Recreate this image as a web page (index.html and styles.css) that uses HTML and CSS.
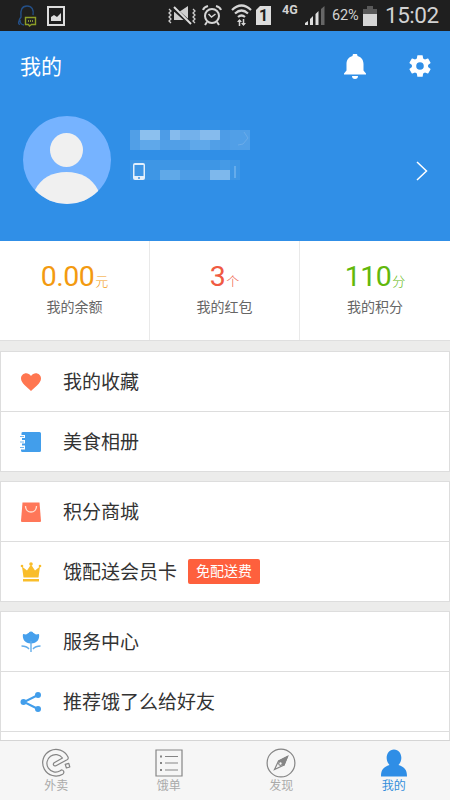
FILE: index.html
```html
<!DOCTYPE html>
<html lang="zh-CN">
<head>
<meta charset="utf-8">
<title>我的</title>
<link rel="stylesheet" href="styles.css">
</head>
<body>
<div class="screen">
  <div class="status">
    <svg class="s-qq" width="20" height="22" viewBox="0 0 20 22" fill="none"><path d="M3 19c-2 1-2-3 1-7C3 5 5 1 10 1s7 4 6 9M3 15c0 2 1 5 4 5" stroke="#244f86" stroke-width="1.4"/><path d="M8.500 12.500h10v7h-4l-2 1.500-1-1.500h-3z" stroke="#8c9d27" stroke-width="1.400"/><path d="M11 16h1m1 0h1m1 0h1" stroke="#a7b642" stroke-width="1.500"/></svg>
    <svg class="s-pic" width="18" height="20" viewBox="0 0 18 20"><path d="M1 1h16v18H1z" fill="none" stroke="#ddd" stroke-width="2"/><path d="M4 15v-4l3-2 3 2 4-4v8z" fill="#ddd"/></svg>
    <svg class="s-mute" width="29" height="20" viewBox="0 0 29 20"><path d="M7 6h5l9-6v17l-4-3-5 0H7z" fill="#cfcfcf"/><path d="M6 2l18 16" stroke="#1f1f1f" stroke-width="4"/><path d="M7 1l17 17" stroke="#ddd" stroke-width="2"/><path d="M2 3l2 2-2 2 2 2-2 2 2 2-2 2 2 2M26 3l2 2-2 2 2 2-2 2 2 2-2 2 2 2" fill="none" stroke="#ccc" stroke-width="1.300"/></svg>
    <svg class="s-alarm" width="20" height="21" viewBox="0 0 20 21" fill="none" stroke="#d5d5d5" stroke-width="2"><circle cx="10" cy="11" r="7"/><path d="M1 5q1-3 5-4M14 1q4 1 5 4M5 17l-2 3M15 17l2 3"/><path d="M6.500 9l3 3 4-3" stroke-width="1.500"/></svg>
    <svg class="s-wifi" width="21" height="23" viewBox="0 0 21 23" fill="none" stroke="#d5d5d5" stroke-width="2.200"><path d="M1 6q9.500-9 19 0M4 9.500q6.500-6 13 0M7 13q3.500-3 7 0"/><path d="M8.500 22v-6M12.500 15v6" stroke-width="1.500"/><path d="M6 18l2.500-3 2.500 3zM10 19l2.500 3 2.500-3z" fill="#d5d5d5" stroke="none"/></svg>
    <span class="sim">1</span>
    <span class="net">4G</span>
    <svg class="s-signal" width="20" height="20" viewBox="0 0 20 20"><path d="M0 19v-2l3-2v4zM5 19v-6l3-3v9zM10.500 19V8l3-3v14z" fill="#ddd"/><path d="M16 19V3l3.500-3v19z" fill="#666"/></svg>
    <span class="pct">62%</span>
    <svg class="s-batt" width="14" height="20" viewBox="0 0 14 20"><path d="M0 3h4V0h6v3h4v5H0z" fill="#595959"/><path d="M0 8h14v12H0z" fill="#d5d5d5"/></svg>
    <span class="clock">15:02</span>
  </div>

  <header class="header">
    <div class="bar">
      <h1>我的</h1>
      <svg class="bell" width="22" height="25" viewBox="0 0 22 25" fill="#fff"><path d="M0 20.500v-1l2.500-3V10c0-4.500 2.500-7 6-8a2.500 2.500 0 0 1 5 0c3.500 1 6 3.500 6 8v6.500l2.500 3v1zM8 22h6a3 3 0 0 1-6 0z"/></svg>
      <svg class="gear" width="26" height="26" viewBox="0 0 24 24" fill="#fff"><path d="M19.430 12.980c.04-.32.07-.64.07-.98s-.03-.66-.07-.98l2.110-1.650c.19-.15.24-.42.12-.64l-2-3.460c-.12-.22-.39-.3-.61-.22l-2.490 1c-.52-.4-1.080-.73-1.690-.98l-.38-2.650A.49.49 0 0 0 14 2h-4c-.25 0-.46.18-.49.42l-.38 2.650c-.61.25-1.170.59-1.690.98l-2.490-1c-.23-.09-.49 0-.61.22l-2 3.460c-.13.22-.07.49.12.64l2.110 1.650c-.04.32-.07.65-.07.98s.03.66.07.98l-2.110 1.650c-.19.15-.24.42-.12.64l2 3.460c.12.22.39.3.61.22l2.490-1c.52.4 1.080.73 1.690.98l.38 2.650c.03.24.24.42.49.42h4c.25 0 .46-.18.49-.42l.38-2.650c.61-.25 1.170-.59 1.690-.98l2.490 1c.23.09.49 0 .61-.22l2-3.460c.12-.22.07-.49-.12-.64zM12 15.500a3.500 3.500 0 1 1 0-7 3.500 3.500 0 0 1 0 7z"/></svg>
    </div>
    <div class="profile">
      <svg class="avatar" width="88" height="88" viewBox="0 0 88 88"><defs><clipPath id="round"><circle cx="44" cy="44" r="44"/></clipPath></defs><g clip-path="url(#round)"><path d="M0 0h88v88H0z" fill="#76b3ff"/><ellipse cx="43.500" cy="34" rx="16.500" ry="17" fill="#f0f0f0"/><path d="M12 74C18 62 29 56 43.500 56S69 62 75 74v14H12z" fill="#f0f0f0"/></g></svg>
      <svg class="masked" width="120" height="62" viewBox="0 0 120 62">
        <path d="M0 10h120v20H0z" fill="#519fe7"/>
        <path d="M10 0h20v10H10zM70 0h20v10H70zM100 0h10v10h-10z" fill="#3491e6"/>
        <path d="M10 10h20v10H10z" fill="#8cc0ee"/><path d="M40 10h10v10H40zM70 10h20v10H70z" fill="#86bbed"/><path d="M50 10h20v10H50z" fill="#73b1eb"/><path d="M30 10h10v10H30zM90 10h10v20H90z" fill="#4d9ce7"/><path d="M10 20h20v10H10zM60 20h20v10H60z" fill="#5fa8ea"/>
        <path d="M114 12l4 6-5 6-5 1" fill="none" stroke="#6aacea"/>
        <path d="M0 40h110v20H0z" fill="#3e96e5"/><path d="M30 50h20v10H30z" fill="#60a9e8"/><path d="M50 50h30v10H50z" fill="#4d9de6"/><path d="M80 50h20v10H80z" fill="#7eb8ec"/><path d="M90 40h10v10H90z" fill="#459ae6"/>
        <path d="M105 46v12" stroke="#8bc2f2"/>
        <path d="M5 43h8a2 2 0 0 1 2 2v13a2 2 0 0 1-2 2H5a2 2 0 0 1-2-2V45a2 2 0 0 1 2-2z" fill="#e4f0fb"/><path d="M4.500 45h9v11h-9z" fill="#3f96e5"/><circle cx="9" cy="58" r="1" fill="#3f96e5"/>
      </svg>
      <svg class="chevron" width="12" height="20" viewBox="0 0 12 20"><path d="M1 1l9.500 9L1 19" fill="none" stroke="#fff" stroke-width="1.500"/></svg>
    </div>
  </header>

  <section class="stats">
    <div class="stat orange"><div class="num">0.00<small>元</small></div><div class="cap">我的余额</div></div>
    <div class="stat red"><div class="num">3<small>个</small></div><div class="cap">我的红包</div></div>
    <div class="stat green"><div class="num">110<small>分</small></div><div class="cap">我的积分</div></div>
  </section>

  <main class="menu">
    <section class="card">
      <div class="row"><svg width="22" height="20" viewBox="0 0 22 20"><path d="M11 19C7 15 1 11 1 6.500 1 1.500 7.500-1 11 4c3.500-5 10-2.500 10 2.500C21 11 15 15 11 19z" fill="#ff7650"/></svg><span>我的收藏</span></div>
      <div class="row"><svg width="22" height="22" viewBox="0 0 22 22"><path d="M3 1h16.500q1.500 0 1.500 1.500v17q0 1.500-1.500 1.500H2.500q-1.500 0-1.500-1.500V18.500h4v-4H2v-2h3V9H2V7h3V4H1.500V2q0-1 1.500-1z" fill="#429eeb"/><path d="M0 5.500h4M0 11h4M0 16.500h4" stroke="#75b7ef" stroke-width="1.200"/></svg><span>美食相册</span></div>
    </section>
    <section class="card">
      <div class="row"><svg width="22" height="22" viewBox="0 0 22 22"><path d="M2.500 1.500h17L21 20q0 1-1 1H2q-1 0-1-1z" fill="#ff7759"/><path d="M5.500 5c0 8 11 8 11 0" fill="none" stroke="#ffe2d4" stroke-width="1.300"/></svg><span>积分商城</span></div>
      <div class="row"><svg width="22" height="22" viewBox="0 0 22 22" fill="#f9bd2a"><path d="M2 5.500l5 4 4-6 4 6 5-4-1.500 11h-15zM3 18h16v2.500H3z"/><circle cx="11" cy="3" r="1.800"/><circle cx="2" cy="5" r="1.300"/><circle cx="20" cy="5" r="1.300"/></svg><span>饿配送会员卡</span><b class="tag">免配送费</b></div>
    </section>
    <section class="card">
      <div class="row"><svg width="22" height="22" viewBox="0 0 22 22"><path d="M3 3l3 .5L8.500 2h5L16 3.500l3-.5c1 5-2 9.500-8 9.500S2 8 3 3z" fill="#46a0ed"/><circle cx="11" cy="3" r="2.500" fill="#46a0ed"/><path d="M11 10v11M1.500 15q5 0 7.500 3M20.500 15q-5 0-7.500 3" fill="none" stroke="#63adea" stroke-width="1.400"/></svg><span>服务中心</span></div>
      <div class="row"><svg width="22" height="22" viewBox="0 0 22 22" fill="#429eeb"><path d="M18 4L4 11l14 7" fill="none" stroke="#429eeb" stroke-width="2"/><circle cx="18" cy="4" r="3"/><circle cx="3.500" cy="11" r="3"/><circle cx="18" cy="18" r="3"/></svg><span>推荐饿了么给好友</span></div>
      <div class="row"></div>
    </section>
  </main>

  <nav class="tabs">
    <div class="tab"><svg width="30" height="30" viewBox="0 0 30 30" fill="none" stroke="#858585" stroke-width="1.200" stroke-linejoin="round"><path d="M22.500 23q1 2-.8 3.200A13.300 13.300 0 1 1 27 9q.8 1.700-.9 2.700L15 17.700q-1.600.7-2.400-.6t.6-2.400L21.500 10a8.700 8.700 0 1 0-2.300 12.700q2.200-1.600 3.300.3z"/><path d="M24.200 16.300l3.600-1 1 3.700-3.400 1z"/></svg><span>外卖</span></div>
    <div class="tab"><svg width="30" height="30" viewBox="0 0 30 30" fill="none" stroke="#858585" stroke-width="1.200"><path d="M2 2h26v26H2zM11 8.500h13M11 15h13M11 22h13"/><path d="M6 8.500h2M6 15h2M6 22h2" stroke-width="2"/></svg><span>饿单</span></div>
    <div class="tab"><svg width="30" height="30" viewBox="0 0 30 30" fill="none" stroke="#858585" stroke-width="1.200"><circle cx="15" cy="15" r="13.900"/><path d="M21.500 8.500L18 17l-9.500 4.500 4-8.500z"/><path d="M21.500 8.500L18 17l-3-1-2-3z" fill="#858585"/><circle cx="14.500" cy="15.500" r="1.800" fill="#f6f6f6"/></svg><span>发现</span></div>
    <div class="tab active"><svg width="30" height="30" viewBox="0 0 30 30" fill="#2f8ee6"><path d="M2 28.500c0-7 2.500-9.500 8.500-11.500C5 11 8 1.500 15 1.500S25 11 19.500 17c6 2 8.500 4.500 8.500 11.500z"/></svg><span>我的</span></div>
  </nav>
</div>
</body>
</html>
```
FILE: styles.css
```css
* { box-sizing: border-box; }
body {
  margin: 0;
  font-family: Roboto, "Noto Sans CJK SC", sans-serif;
  color: #333;
}
svg { display: block; flex: none; }
.screen {
  width: 450px;
  height: 800px;
  display: flex;
  flex-direction: column;
  overflow: hidden;
  background: #ececeb;
}
.status {
  flex: none;
  height: 31px;
  display: flex;
  align-items: center;
  padding-left: 17px;
  background: #1f1f1f;
  color: #d2d2d2;
  line-height: 1;
  white-space: nowrap;
}
.s-pic { margin-left: 10px; }
.s-mute { margin-left: 102px; }
.s-alarm { margin-left: 6px; }
.s-wifi { margin-left: 9px; }
.sim {
  width: 15px;
  height: 19px;
  margin-left: 4px;
  background: #ddd;
  color: #1f1f1f;
  font-size: 16px;
  font-weight: 700;
  line-height: 19px;
  text-align: center;
  clip-path: polygon(4px 0, 100% 0, 100% 100%, 0 100%, 0 4px);
}
.net { width: 18px; margin: -11px 0 0 11px; font-size: 12.500px; font-weight: 700; }
.s-signal { margin-left: 5px; }
.pct { width: 28px; margin: 2px 0 0 7px; font-size: 14.500px; letter-spacing: -.1px; }
.s-batt { margin-left: 3px; }
.clock { margin-left: 8px; font-size: 22.500px; letter-spacing: -.5px; }

.header { flex: none; height: 210px; background: #308fe7; }
.bar { height: 72px; display: flex; align-items: center; padding: 0 17px 0 20px; }
.bar h1 { flex: 1; margin: 0; color: #fff; font-size: 21px; font-weight: 400; line-height: 30px; }
.bell { margin-bottom: 1px; }
.gear { margin: 0 0 2px 41px; }
.profile { display: flex; padding: 13px 22px 0 22.500px; }
.masked { margin: 4px 0 0 19.500px; }
.chevron { margin: 45px 0 0 auto; }

.stats {
  flex: none;
  height: 100px;
  display: grid;
  grid-template-columns: repeat(3, 1fr);
  background: #fff;
  border-bottom: 1px solid #dfdfdf;
}
.stat { padding-top: 19px; text-align: center; }
.stat:not(:last-child) { border-right: 1px solid #e9e9e9; }
.num { height: 34px; font-size: 28.500px; line-height: 34px; letter-spacing: -.5px; white-space: nowrap; }
.num small { font-size: 13px; font-weight: 300; letter-spacing: 0; margin-left: 1px; }
.cap { margin-top: 3px; font-size: 14px; line-height: 20px; color: #666; }
.orange { color: #f39a10; }
.red { color: #f05a42; }
.green { color: #62b80b; }

.menu { flex: 1; min-height: 0; overflow: hidden; padding-top: 10px; }
.card { height: 121px; margin-bottom: 9px; background: #fff; border: 1px solid #ddd; }
.card:last-child { height: auto; }
.row { height: 59px; display: flex; align-items: center; padding-left: 19px; font-size: 19px; line-height: 28px; }
.row + .row { height: 60px; border-top: 1px solid #ddd; }
.row span { margin: 3px 0 0 21px; }
.tag {
  width: 72px;
  height: 25px;
  margin-left: 11px;
  border-radius: 2px;
  background: #fe603d;
  color: #fff;
  font-size: 14px;
  font-weight: 400;
  line-height: 25px;
  text-align: center;
}

.tabs {
  flex: none;
  height: 60px;
  display: grid;
  grid-template-columns: repeat(4, 1fr);
  background: #f6f6f6;
  border-top: 1px solid #d5d5d5;
}
.tab { display: flex; flex-direction: column; align-items: center; padding-top: 7px; color: #aaa; font-size: 12px; line-height: 17px; }
.tab.active { color: #338edb; }
```
